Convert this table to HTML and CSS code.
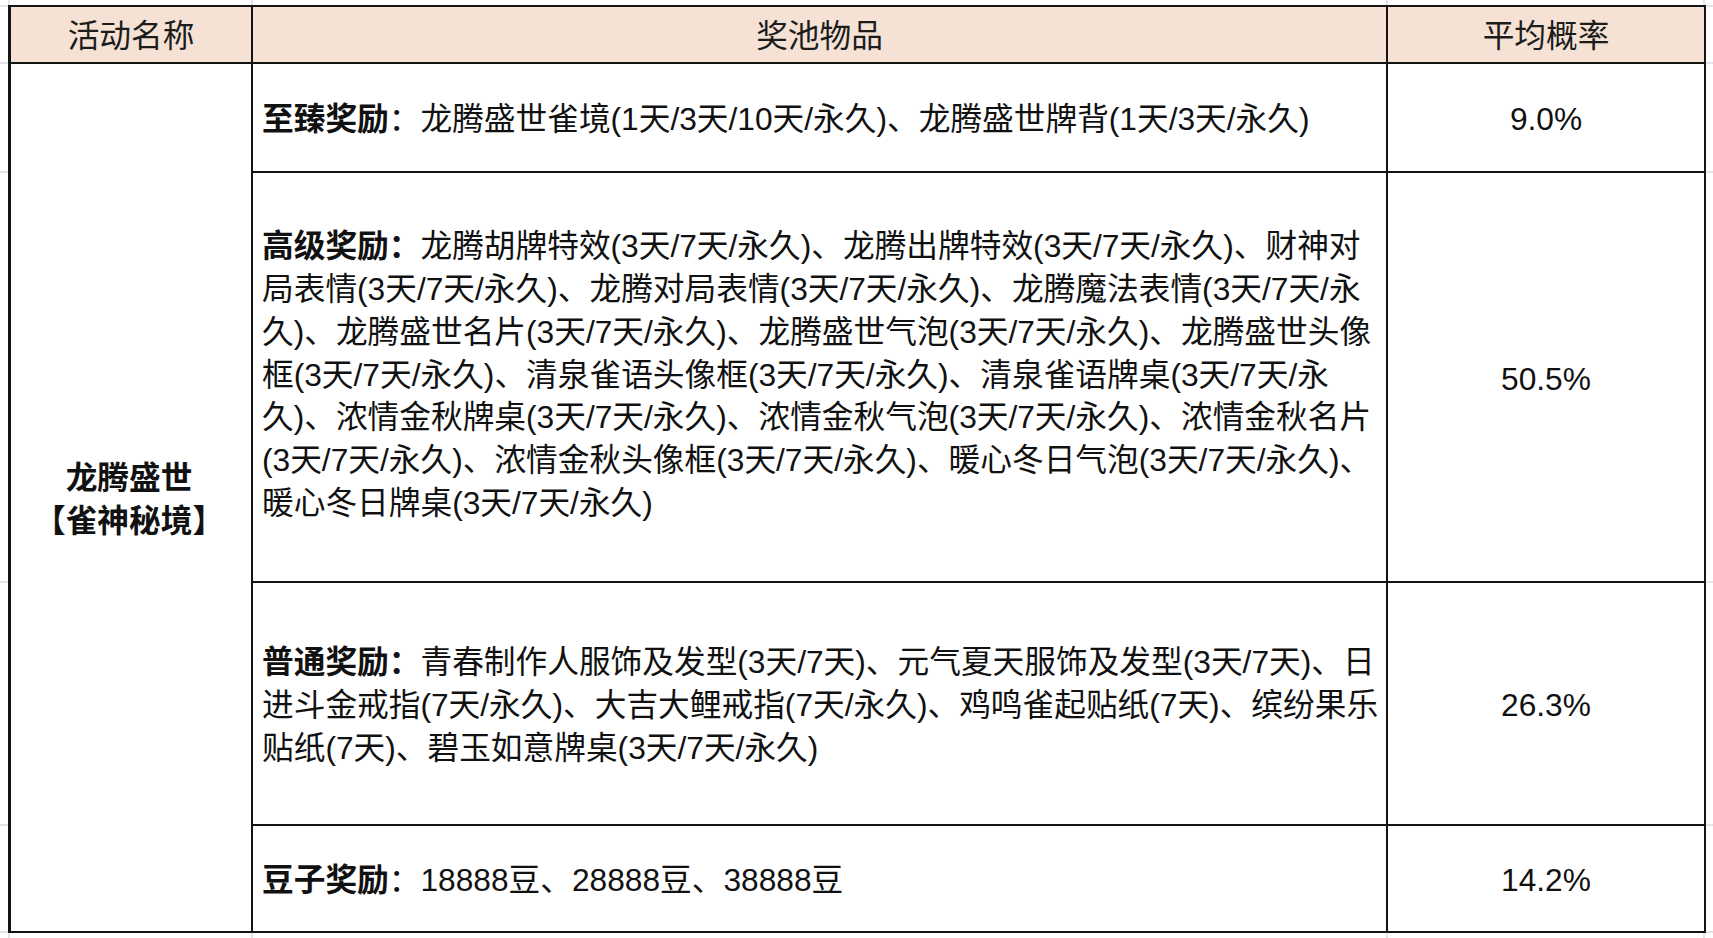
FILE: index.html
```html
<!DOCTYPE html>
<html lang="zh-CN">
<head>
<meta charset="utf-8">
<title>奖池物品概率</title>
<link rel="stylesheet" href="styles.css">
</head>
<body>
<div class="sheet">
  <table class="pool">
    <colgroup>
      <col class="c-name">
      <col class="c-items">
      <col class="c-rate">
    </colgroup>
    <thead>
      <tr class="head">
        <th class="first">活动名称</th>
        <th>奖池物品</th>
        <th>平均概率</th>
      </tr>
    </thead>
    <tbody>
      <tr class="r1">
        <td class="name first" rowspan="4">龙腾盛世<br>【雀神秘境】</td>
        <td class="items"><b>至臻奖励</b>：龙腾盛世雀境(1天/3天/10天/永久)、龙腾盛世牌背(1天/3天/永久)</td>
        <td class="rate">9.0%</td>
      </tr>
      <tr class="r2">
        <td class="items"><b>高级奖励：</b>龙腾胡牌特效(3天/7天/永久)、龙腾出牌特效(3天/7天/永久)、财神对<br>局表情(3天/7天/永久)、龙腾对局表情(3天/7天/永久)、龙腾魔法表情(3天/7天/永<br>久)、龙腾盛世名片(3天/7天/永久)、龙腾盛世气泡(3天/7天/永久)、龙腾盛世头像<br>框(3天/7天/永久)、清泉雀语头像框(3天/7天/永久)、清泉雀语牌桌(3天/7天/永<br>久)、浓情金秋牌桌(3天/7天/永久)、浓情金秋气泡(3天/7天/永久)、浓情金秋名片<br>(3天/7天/永久)、浓情金秋头像框(3天/7天/永久)、暖心冬日气泡(3天/7天/永久)、<br>暖心冬日牌桌(3天/7天/永久)</td>
        <td class="rate">50.5%</td>
      </tr>
      <tr class="r3">
        <td class="items"><b>普通奖励：</b>青春制作人服饰及发型(3天/7天)、元气夏天服饰及发型(3天/7天)、日<br>进斗金戒指(7天/永久)、大吉大鲤戒指(7天/永久)、鸡鸣雀起贴纸(7天)、缤纷果乐<br>贴纸(7天)、碧玉如意牌桌(3天/7天/永久)</td>
        <td class="rate">26.3%</td>
      </tr>
      <tr class="r4">
        <td class="items"><b>豆子奖励</b>：18888豆、28888豆、38888豆</td>
        <td class="rate">14.2%</td>
      </tr>
    </tbody>
  </table>
</div>
</body>
</html>
```
FILE: styles.css
```css
html, body {
  margin: 0;
  padding: 0;
  background: #ffffff;
}

body {
  font-family: "Liberation Sans", "Noto Sans CJK SC", sans-serif;
  color: #111111;
}

.sheet {
  width: 1713px;
  height: 938px;
  box-sizing: border-box;
  padding: 5px 0 0 8px;
  background-color: #ffffff;
  background-image:
    linear-gradient(#e4e4e8, #e4e4e8),
    linear-gradient(#e4e4e8, #e4e4e8),
    linear-gradient(#e4e4e8, #e4e4e8),
    linear-gradient(#e4e4e8, #e4e4e8),
    linear-gradient(#e4e4e8, #e4e4e8),
    linear-gradient(#e4e4e8, #e4e4e8),
    linear-gradient(#e4e4e8, #e4e4e8),
    linear-gradient(#e4e4e8, #e4e4e8),
    linear-gradient(#e4e4e8, #e4e4e8),
    linear-gradient(#e4e4e8, #e4e4e8);
  background-repeat: no-repeat;
  background-size:
    2px 938px, 2px 938px, 2px 938px, 2px 938px,
    1713px 2px, 1713px 2px, 1713px 2px, 1713px 2px, 1713px 2px, 1713px 2px;
  background-position:
    8px 0, 251px 0, 1386px 0, 1703px 0,
    0 5px, 0 62px, 0 171px, 0 581px, 0 824px, 0 931px;
}

.pool {
  border-collapse: separate;
  border-spacing: 0;
  table-layout: fixed;
  width: 1698px;
  border-top: 2px solid #141414;
  font-size: 31.7px;
  line-height: 42.8px;
  background: #ffffff;
}

.c-name { width: 245px; }
.c-items { width: 1135px; }
.c-rate { width: 318px; }

.pool th,
.pool td {
  border-right: 2px solid #141414;
  border-bottom: 2px solid #141414;
  padding: 4px 0 0 0;
  vertical-align: middle;
  background: #ffffff;
}

.pool .first {
  border-left: 3px solid #141414;
}

.head { height: 57px; }
.r1 { height: 109px; }
.r2 { height: 410px; }
.r3 { height: 243px; }
.r4 { height: 107px; }

.head th {
  background: #f5e2d4;
  font-weight: normal;
  text-align: center;
  color: #1c1c1c;
}

.pool .head th {
  padding-top: 3px;
}

.pool .name {
  text-align: center;
  font-weight: bold;
  padding-right: 4px;
}

.pool .items {
  padding-left: 9px;
  padding-right: 2px;
  text-align: left;
  white-space: nowrap;
}

.pool .r2 .items {
  padding-top: 0;
  padding-bottom: 4px;
}

.items b {
  font-weight: bold;
}

.rate {
  text-align: center;
}
```
